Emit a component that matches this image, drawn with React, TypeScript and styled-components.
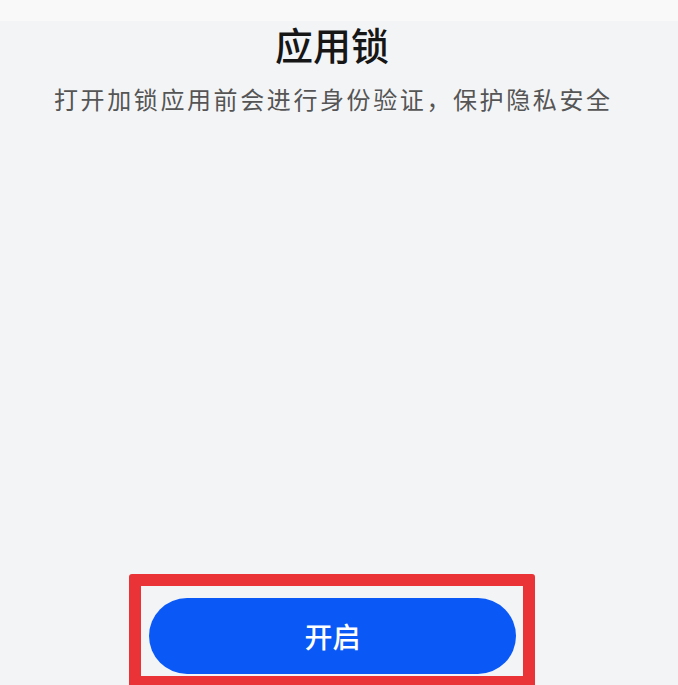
import React from "react";
import styled, { createGlobalStyle } from "styled-components";

const Global = createGlobalStyle`
  html, body { margin: 0; padding: 0; height: 685px; overflow: hidden; background: #f3f4f6; }
  * { box-sizing: border-box; }
`;

const Screen = styled.div`
  height: 685px;
  width: 678px;
  display: flex;
  flex-direction: column;
  background: #f3f4f6;
  font-family: "Noto Sans CJK SC", "Noto Sans", sans-serif;
`;

const TopStrip = styled.div`
  height: 21px;
  background: #f9f9fa;
  flex-shrink: 0;
`;

const Content = styled.div`
  flex: 1;
  width: 664px;
  display: flex;
  flex-direction: column;
  align-items: center;
`;

const Title = styled.h1`
  margin: 0;
  font-size: 38px;
  line-height: 46px;
  font-weight: 500;
  color: #161616;
`;

const Subtitle = styled.p`
  margin: 16px 0 0;
  font-size: 24px;
  line-height: 32px;
  letter-spacing: 2.6px;
  margin-right: -2.6px;
  color: #555555;
`;

const Highlight = styled.div`
  margin-top: auto;
  margin-bottom: -3px;
  width: 406px;
  border: 12px solid #ea3337;
  border-radius: 3px;
  padding: 12px 7px 2px 8px;
`;

const PrimaryButton = styled.button`
  display: flex;
  align-items: center;
  justify-content: center;
  width: 367px;
  height: 76px;
  border: none;
  border-radius: 38px;
  background: #0a59f7;
  color: #ffffff;
  font-family: "Noto Sans CJK SC", "Noto Sans", sans-serif;
  font-size: 28px;
  font-weight: 500;
  padding: 0;
`;

export default function App() {
  return (
    <Screen>
      <Global />
      <TopStrip />
      <Content>
        <Title>应用锁</Title>
        <Subtitle>打开加锁应用前会进行身份验证，保护隐私安全</Subtitle>
        <Highlight>
          <PrimaryButton>开启</PrimaryButton>
        </Highlight>
      </Content>
    </Screen>
  );
}
